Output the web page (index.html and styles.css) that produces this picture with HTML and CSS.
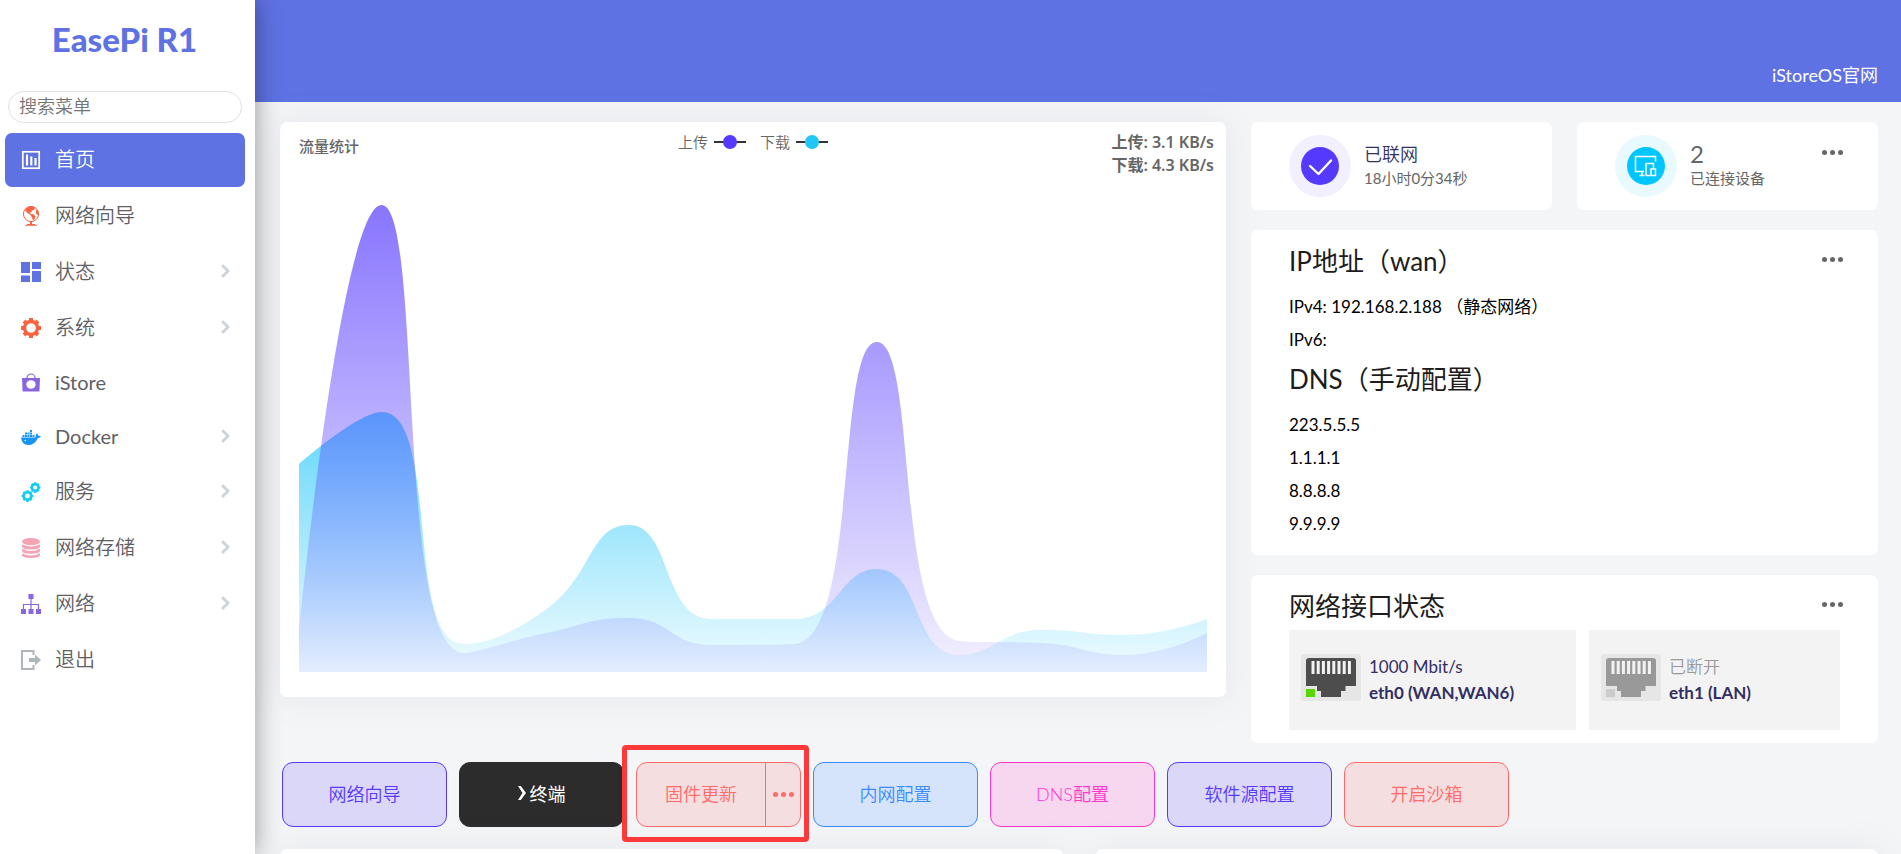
FILE: index.html
```html
<!DOCTYPE html>
<html lang="zh-CN">
<head>
<meta charset="utf-8">
<title>EasePi R1</title>
<link rel="stylesheet" href="styles.css">
</head>
<body>
<aside class="sidebar">
  <a class="brand" href="#">EasePi R1</a>
  <input class="search" type="text" placeholder="搜索菜单" aria-label="搜索菜单">
  <nav class="menu">
    <a class="item active" href="#"><svg class="ico" viewBox="0 0 20 20" fill="none" stroke="#fff"><rect x="1.8" y="1.8" width="16.4" height="16.4" stroke-width="1.7"/><path d="M6 4.500v11M10.300 6.500v9M14.500 8v7.500" stroke-width="2.200"/></svg><span>首页</span></a>
    <a class="item" href="#"><svg class="ico" viewBox="0 0 20 20"><circle cx="10" cy="8" r="7.600" fill="#fff" stroke="#fb6340" stroke-width="1"/><path fill="#fb6340" d="M5 2.500Q9-.5 13 1l1 1-1 2-2 .5-1 2-2 0 2 1.500 3 .5 1.500 2-1 2.500-1.500 1.500-1-3-1.500-2.500L6.500 7 5 5.500 4 4zM15 4l2 1 .6 3-1.600 1-1-2zM9 15.500h2v2.500h3v.8l2 .4v.6H4v-.6l2-.4V18h3z"/></svg><span>网络向导</span></a>
    <a class="item" href="#"><svg class="ico" viewBox="0 0 20 20" fill="#5e72e4"><path d="M0 0h9v11H0zM11 0h9v7h-9zM0 13.500h9V20H0zM11 9h9v11h-9z"/></svg><span>状态</span><svg class="chev" viewBox="0 0 10 14"><path d="M2 2l5 5-5 5"/></svg></a>
    <a class="item" href="#"><svg class="ico" viewBox="0 0 20 20" fill="none" stroke="#fb6340"><circle cx="10" cy="10" r="6.500" stroke-width="3.400"/><path stroke-width="4" d="M10 0v3M10 17v3M0 10h3M17 10h3M3 3l2 2M15 15l2 2M17 3l-2 2M5 15l-2 2"/></svg><span>系统</span><svg class="chev" viewBox="0 0 10 14"><path d="M2 2l5 5-5 5"/></svg></a>
    <a class="item latin" href="#"><svg class="ico" viewBox="0 0 20 20"><path d="M1 5h18l-.6 13.500H1.600z" fill="#8965e0"/><path d="M6 6.500V5a4 4 0 0 1 8 0v1.500" fill="none" stroke="#8965e0" stroke-width="1.200"/><ellipse cx="10" cy="11.500" rx="4.700" ry="4.200" fill="#fff"/></svg><span>iStore</span></a>
    <a class="item latin" href="#"><svg class="ico" viewBox="0 0 20 20" fill="#1694f6"><path d="M9 3h2v2H9zM4 5.500h2v2H4zM6.500 5.500h2v2h-2zM9 5.500h2v2H9zM1.500 8h2v2h-2zM4 8h2v2H4zM6.500 8h2v2h-2zM9 8h2v2H9zM11.500 8h2v2h-2zM0 10.500h14q1.200-.6 1-2.500.3-1.300 1-1.700 1.200 1 1.200 2.500 1.800-.3 2.800.5-.8 1.700-3.300 1.900Q14 18 7 18 1 18 0 10.500z"/><circle cx="4.300" cy="13.500" r=".8" fill="#fff"/></svg><span>Docker</span><svg class="chev" viewBox="0 0 10 14"><path d="M2 2l5 5-5 5"/></svg></a>
    <a class="item" href="#"><svg class="ico" viewBox="0 0 20 20" fill="none" stroke="#11cdef"><circle cx="6.500" cy="14" r="3.700" stroke-width="2.600"/><path stroke-width="2.400" d="M6.500 8.200v2M6.500 18v2M.7 14h2M10.300 14h2M2.400 9.900l1.400 1.400M9.200 16.700l1.400 1.400M10.600 9.900l-1.400 1.400M3.800 16.700l-1.400 1.400"/><circle cx="14.200" cy="5.500" r="3.300" stroke-width="2.400"/><path stroke-width="2.200" d="M14.200.2v2M14.200 9v2M9 5.500h2M17.500 5.500h2M10.600 1.900l1.300 1.300M16.500 7.800l1.300 1.300M17.800 1.900l-1.300 1.300M11.900 7.800l-1.300 1.300"/></svg><span>服务</span><svg class="chev" viewBox="0 0 10 14"><path d="M2 2l5 5-5 5"/></svg></a>
    <a class="item" href="#"><svg class="ico" viewBox="0 0 20 20" fill="#f3a4b5"><ellipse cx="10" cy="3.600" rx="9" ry="3.600"/><path d="M1 6.200q9 4.600 18 0v2.300q0 3-9 3t-9-3zM1 10.800q9 4.600 18 0v2q0 3-9 3t-9-3zM1 15.200q9 4.600 18 0v1.800q0 3-9 3t-9-3z"/></svg><span>网络存储</span><svg class="chev" viewBox="0 0 10 14"><path d="M2 2l5 5-5 5"/></svg></a>
    <a class="item" href="#"><svg class="ico" viewBox="0 0 20 20" fill="#8965e0"><path d="M7.500 0h5v5h-5zM0 15h5v5H0zM7.500 15h5v5h-5zM15 15h5v5h-5z"/><path d="M10 5v10M2.500 15v-4.500h15V15" fill="none" stroke="#8965e0" stroke-width="1.200"/></svg><span>网络</span><svg class="chev" viewBox="0 0 10 14"><path d="M2 2l5 5-5 5"/></svg></a>
    <a class="item" href="#"><svg class="ico" viewBox="0 0 20 20"><path d="M12.500 5V1H1v18h11.500v-4" fill="none" stroke="#adb5bd" stroke-width="2"/><path d="M8 8h6V4.500L20 10l-6 5.500V12H8z" fill="#adb5bd"/></svg><span>退出</span></a>
  </nav>
</aside>

<div class="page">
  <header class="topbar"><a href="#">iStoreOS官网</a></header>
  <main class="content">
    <div class="overview">
      <section class="card traffic">
        <div class="traffic-head">
          <h2>流量统计</h2>
          <div class="legend">
            <span>上传</span><svg class="mark" viewBox="0 0 32 14"><path d="M0 7h32"/><circle cx="16" cy="7" r="7" fill="#5539fe"/></svg>
            <span>下载</span><svg class="mark" viewBox="0 0 32 14"><path d="M0 7h32"/><circle cx="16" cy="7" r="7" fill="#22c7f9"/></svg>
          </div>
          <div class="speeds"><div>上传: 3.1 KB/s</div><div>下载: 4.3 KB/s</div></div>
        </div>
        <svg class="plot" viewBox="0 0 908 476" preserveAspectRatio="none">
          <defs>
            <linearGradient id="down" x2="0" y2="1"><stop offset="0" stop-color="#22c7f9" stop-opacity=".72"/><stop offset="1" stop-color="#22c7f9" stop-opacity=".07"/></linearGradient>
            <linearGradient id="up" x2="0" y2="1"><stop offset="0" stop-color="#553afe" stop-opacity=".7"/><stop offset="1" stop-color="#553afe" stop-opacity=".07"/></linearGradient>
          </defs>
          <path id="down-area" fill="url(#down)"/>
          <path id="up-area" fill="url(#up)"/>
        </svg>
      </section>

      <div class="side">
        <div class="stats">
          <section class="card stat">
            <svg class="badge" viewBox="0 0 62 62"><circle cx="31" cy="31" r="31" fill="#f2efff"/><circle cx="31" cy="31" r="19" fill="#553afe"/><path d="M21 31l8.500 8L42 25.500" fill="none" stroke="#fff" stroke-width="2.400" stroke-linecap="round" stroke-linejoin="round"/></svg>
            <div class="stat-text"><b class="online">已联网</b><span>18小时0分34秒</span></div>
          </section>
          <section class="card stat">
            <svg class="badge" viewBox="0 0 62 62"><circle cx="31" cy="31" r="31" fill="#e9faff"/><circle cx="31" cy="31" r="19" fill="#00c6ff"/><g fill="none" stroke="#fff" stroke-width="1.500"><path d="M29 36.500h-8.500v-15h20v5M27 36.500v4M24.500 40.500h5M31 40.500v-12h7.500v5M31 40.500h4"/><rect x="36" y="34" width="4.500" height="6.500"/></g></svg>
            <div class="stat-text"><b class="count">2</b><span>已连接设备</span></div>
            <button class="more" aria-label="更多"><i></i><i></i><i></i></button>
          </section>
        </div>
        <section class="card info">
          <div class="head"><h3>IP地址（wan）</h3><button class="more" aria-label="更多"><i></i><i></i><i></i></button></div>
          <p>IPv4: 192.168.2.188 （静态网络）</p>
          <p>IPv6:</p>
          <div class="head"><h3>DNS（手动配置）</h3></div>
          <p>223.5.5.5</p>
          <p>1.1.1.1</p>
          <p>8.8.8.8</p>
          <p>9.9.9.9</p>
        </section>
        <section class="card ports">
          <div class="head"><h3>网络接口状态</h3><button class="more" aria-label="更多"><i></i><i></i><i></i></button></div>
          <div class="port-list">
            <div class="port">
              <svg viewBox="0 0 60 47"><rect width="60" height="47" rx="3" fill="#e6e6e6"/><path d="M5 7q0-3 3-3h44q3 0 3 3v25H44.500v5H40v6H20v-6h-4v-5H5z" fill="#4d4d4d"/><path d="M12 7v13M17.200 7v13M22.400 7v13M27.600 7v13M32.800 7v13M38 7v13M43.200 7v13M48.400 7v13" stroke="#f2f2f2" stroke-width="3"/><rect x="5" y="35" width="9" height="8" fill="#5ad600"/></svg>
              <div><span>1000 Mbit/s</span><b>eth0 (WAN,WAN6)</b></div>
            </div>
            <div class="port off">
              <svg viewBox="0 0 60 47"><rect width="60" height="47" rx="3" fill="#e6e6e6"/><path d="M5 7q0-3 3-3h44q3 0 3 3v25H44.500v5H40v6H20v-6h-4v-5H5z" fill="#999"/><path d="M12 7v13M17.200 7v13M22.400 7v13M27.600 7v13M32.800 7v13M38 7v13M43.200 7v13M48.400 7v13" stroke="#f2f2f2" stroke-width="3"/><rect x="5" y="35" width="9" height="8" fill="#ccc"/></svg>
              <div><span>已断开</span><b>eth1 (LAN)</b></div>
            </div>
          </div>
        </section>
      </div>
    </div>

    <div class="actions">
      <button class="btn violet">网络向导</button>
      <button class="btn dark"><svg viewBox="0 0 8 14"><path d="M0 0h2.800L8 7l-5.200 7H0l4.500-7z" fill="#fff"/></svg>终端</button>
      <div class="split">
        <div class="btn red pair"><button>固件更新</button><button class="more" aria-label="更多选项"><i></i><i></i><i></i></button></div>
        <span class="highlight"></span>
      </div>
      <button class="btn blue">内网配置</button>
      <button class="btn pink">DNS配置</button>
      <button class="btn violet">软件源配置</button>
      <button class="btn red">开启沙箱</button>
    </div>

    <div class="bottom"><section class="card"></section><section class="card"></section></div>
  </main>
</div>
<script src="chart.js"></script>
</body>
</html>
```

FILE: styles.css
```css
* { box-sizing: border-box; }
body {
  margin: 0;
  display: flex;
  height: 100vh;
  overflow: hidden;
  background: #f4f5f7;
  font-family: Lato, "Noto Sans CJK SC", sans-serif;
  font-weight: 350;
  font-size: 17px;
  color: #212529;
}
a { color: inherit; text-decoration: none; }
button { font: inherit; color: inherit; background: none; border: 0; padding: 0; cursor: pointer; }
h2, h3, p { margin: 0; font-weight: inherit; }
svg { display: block; flex: none; }

.sidebar {
  position: relative;
  z-index: 2;
  flex: none;
  width: 255px;
  background: #fff;
  box-shadow: 0 0 24px rgba(0, 0, 0, .4);
  display: flex;
  flex-direction: column;
}
.brand {
  height: 80px;
  margin-bottom: 11px;
  text-align: center;
  font-weight: 900;
  font-size: 33px;
  line-height: 78px;
  padding-right: 6px;
  color: #5e72e4;
}
.search {
  height: 32px;
  margin: 0 13px 10px 8px;
  padding: 0 10px 2px;
  border: 1px solid #dee2e6;
  border-radius: 16px;
  font: inherit;
  font-size: 18px;
}
.search::placeholder { color: #757575; opacity: 1; }
.menu { display: flex; flex-direction: column; gap: 2px; padding: 0 10px 0 5px; }
.item {
  display: flex;
  align-items: center;
  height: 54px;
  padding: 0 14px 0 16px;
  border-radius: 7px;
  font-size: 20px;
  line-height: 26px;
  color: #5f6066;
}
.item span { padding-bottom: 2px; }
.item.latin { height: 52px; font-weight: 400; }
.item.active { background: #5e72e4; color: #fff; }
.ico { width: 20px; height: 20px; margin-right: 14px; }
.chev { width: 10px; height: 14px; margin: 0 0 3px auto; fill: none; stroke: #ced4da; stroke-width: 3; stroke-linecap: round; stroke-linejoin: round; }

.page { flex: 1; min-width: 0; overflow: hidden; }
.topbar {
  height: 102px;
  padding: 0 23px 15px;
  display: flex;
  align-items: flex-end;
  justify-content: flex-end;
  background: #5e72e4;
  color: #fff;
  font-size: 18px;
  font-weight: 400;
  line-height: 24px;
}
.content { padding: 20px 23px 0 25px; }
.card { background: #fff; border-radius: 7px; }

.overview { display: grid; grid-template-columns: 946fr 627fr; gap: 25px; align-items: start; }
.traffic { padding-bottom: 25px; box-shadow: 0 0 32px rgba(136, 152, 170, .15); }
.traffic-head {
  display: grid;
  grid-template-columns: 1fr auto 1fr;
  padding: 9px 12px 0;
  height: 74px;
  font-size: 15px;
  color: #666;
}
.traffic-head h2 { padding: 4px 0 0 7px; font-size: 15px; font-weight: 500; line-height: 23px; }
.legend { display: flex; align-items: center; gap: 6px; height: 21px; }
.mark { width: 32px; height: 14px; stroke-width: 2; }
.mark path { stroke: #333; }
.mark + span { margin-left: 8px; }
.speeds { justify-self: end; font-family: "Noto Sans", "Noto Sans CJK SC", sans-serif; font-size: 16px; font-weight: 600; line-height: 23px; }
.plot { width: calc(100% - 38px); height: 476px; margin: 0 19px; }

.side { display: flex; flex-direction: column; gap: 20px; }
.stats { display: grid; grid-template-columns: 1fr 1fr; gap: 25px; }
.stat { display: flex; align-items: center; gap: 13px; padding: 13px 35px 13px 38px; color: #666; }
.stat .more { margin-left: auto; align-self: flex-start; padding-top: 15px; }
.badge { width: 62px; height: 62px; }
.stat-text { font-size: 15px; line-height: 24px; font-weight: 400; }
.stat-text b, .stat-text span { display: block; }
.online { font-size: 18px; font-weight: 350; color: #322f62; }
.count { font-size: 24px; font-weight: 400; }
.more { display: flex; gap: 3px; color: #666; }
.more i { width: 5px; height: 5px; border-radius: 50%; background: currentColor; }

.info, .ports { padding: 8px 38px 15px; color: #000; }
.ports { padding-bottom: 13px; }
.head { display: flex; justify-content: space-between; align-items: center; margin-right: -3px; }
.head .more { padding-bottom: 5px; }
.info .head { margin-bottom: 5px; }
.head h3 { font-size: 26px; line-height: 47px; font-weight: 400; color: #1c1c1c; }
.info p { line-height: 33px; font-weight: 400; }
.port-list { display: grid; grid-template-columns: 287fr 251fr; gap: 13px; }
.port {
  display: flex;
  gap: 8px;
  height: 100px;
  padding: 24px 12px 0;
  background: #f3f3f3;
  color: #322f62;
}
.port svg { width: 60px; height: 47px; }
.port span, .port b { display: block; line-height: 26px; white-space: nowrap; }
.port span { font-weight: 400; }
.port b { font-weight: 700; }
.port.off span { color: #999; font-weight: 350; }

.actions { display: flex; gap: 12px; padding: 19px 2px 22px; }
.btn {
  width: 165px;
  height: 65px;
  display: flex;
  align-items: center;
  justify-content: center;
  gap: 4px;
  padding-bottom: 4px;
  border: 1px solid currentColor;
  border-radius: 11px;
  font-size: 18px;
}
.btn svg { width: 8px; height: 14px; }
.violet { color: #553afe; background: #dbd7f8; }
.dark { color: #fff; background: #2c2c2c; border-color: #2c2c2c; font-weight: 400; }
.red { color: #ff6a6a; background: #f5dee0; }
.blue { color: #3b8bff; background: #d5e4fa; }
.pink { color: #ff35cb; background: #f6d7ef; }
.split { position: relative; }
.pair { gap: 0; padding: 0; align-items: stretch; overflow: hidden; }
.pair button { flex: 1; padding-bottom: 4px; }
.pair .more { flex: none; width: 35px; padding: 0; color: inherit; border-left: 1px solid currentColor; align-items: center; justify-content: center; }
.highlight {
  position: absolute;
  inset: -17px -8px -15px -14px;
  border: 5px solid #fe3939;
  border-radius: 4px;
  pointer-events: none;
}
.bottom { display: grid; grid-template-columns: 1fr 1fr; gap: 33px; }
.bottom .card { min-height: 300px; box-shadow: 0 0 32px rgba(136, 152, 170, .15); }
```

FILE: chart.js
```js
// Plot heights (from the top of the 476-unit plot) of the twelve samples.
const series = {
  "down-area": [268, 216, 448, 413, 329, 423, 423, 373, 459, 434, 439, 423],
  "up-area": [434, 9, 457, 437, 422, 449, 448, 146, 445, 447, 459, 437]
};
const WIDTH = 908, BASE = 476, SMOOTH = 0.5;
const clamp = (v, a, b) => Math.min(Math.max(v, Math.min(a, b)), Math.max(a, b));

function areaPath(values) {
  const step = WIDTH / (values.length - 1);
  const p = values.map((y, i) => [i * step, y]);
  let d = `M${p[0]}`, c0 = p[0];
  for (let i = 1; i < p.length; i++) {
    const cur = p[i], prev = p[i - 1], next = p[i + 1];
    let c1 = cur, out = cur;
    if (next) {
      const lp = Math.hypot(cur[0] - prev[0], cur[1] - prev[1]);
      const ln = Math.hypot(next[0] - cur[0], next[1] - cur[1]);
      const r = ln / (lp + ln);
      out = cur.map((v, k) => clamp(v + (next[k] - prev[k]) * SMOOTH * r, v, next[k]));
      c1 = cur.map((v, k) => clamp(v - (out[k] - v) * lp / ln, v, prev[k]));
      out = cur.map((v, k) => v + (v - c1[k]) * ln / lp);
    }
    d += `C${c0} ${c1} ${cur}`;
    c0 = out;
  }
  return `${d}V${BASE}H0Z`;
}

for (const id in series) {
  document.getElementById(id).setAttribute("d", areaPath(series[id]));
}
```
